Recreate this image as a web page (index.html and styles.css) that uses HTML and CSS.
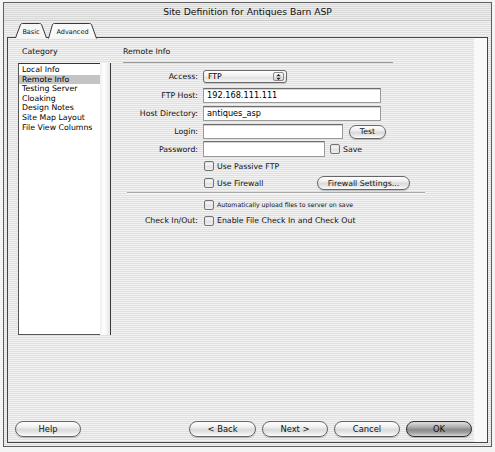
FILE: index.html
```html
<!DOCTYPE html>
<html>
<head>
<meta charset="utf-8">
<link rel="stylesheet" href="styles.css">
</head>
<body>
<div class="window">
  <div class="titlebar">Site Definition for Antiques Barn ASP</div>
  <div class="tabs">
    <div class="tab tab-basic">
      <svg class="tab-shape" viewBox="0 0 32 15" preserveAspectRatio="none"><path d="M0.5 15 L5.5 1.5 Q6 0.5 7.5 0.5 L24.5 0.5 Q26 0.5 26.5 1.5 L31.5 15" fill="#f6f6f6" stroke="#3a3a3a" stroke-width="1"/></svg>
      <span class="tab-label">Basic</span>
    </div>
    <div class="tab tab-adv">
      <svg class="tab-shape" viewBox="0 0 49 15" preserveAspectRatio="none"><path d="M0.5 15.5 L4.5 1.5 Q5 0.5 6.5 0.5 L41.5 0.5 Q43 0.5 43.5 1.5 L48.5 15.5" fill="#f8f8f8" stroke="#3a3a3a" stroke-width="1"/></svg>
      <span class="tab-label">Advanced</span>
    </div>
  </div>
  <div class="panel">
    <div class="content">
      <div class="sidebar">
        <div class="heading side-heading">Category</div>
        <div class="listbox">
          <ul class="list">
            <li>Local Info</li>
            <li class="selected">Remote Info</li>
            <li>Testing Server</li>
            <li>Cloaking</li>
            <li>Design Notes</li>
            <li>Site Map Layout</li>
            <li>File View Columns</li>
          </ul>
          <div class="track"></div>
        </div>
      </div>
      <div class="main">
        <div class="heading">Remote Info</div>
        <div class="rule"></div>
        <div class="row row-access">
          <div class="lbl">Access:</div>
          <div class="select"><span>FTP</span>
            <span class="stepper"><svg viewBox="0 0 8 9" width="8" height="9"><path d="M4 1 L6.5 3.6 L1.5 3.6 Z M4 8 L6.5 5.4 L1.5 5.4 Z" fill="#222"/></svg></span>
          </div>
        </div>
        <div class="row row-ftp">
          <div class="lbl">FTP Host:</div>
          <div class="field w-long">192.168.111.111</div>
        </div>
        <div class="row row-dir">
          <div class="lbl">Host Directory:</div>
          <div class="field w-long">antiques_asp</div>
        </div>
        <div class="row row-login">
          <div class="lbl">Login:</div>
          <div class="field w-login"></div>
          <div class="btn btn-test">Test</div>
        </div>
        <div class="row row-pass">
          <div class="lbl">Password:</div>
          <div class="field w-pass"></div>
          <div class="cb cb-save"></div>
          <div class="cbtext">Save</div>
        </div>
        <div class="row row-passive">
          <div class="lbl"></div>
          <div class="cb"></div>
          <div class="cbtext">Use Passive FTP</div>
        </div>
        <div class="row row-firewall">
          <div class="lbl"></div>
          <div class="cb"></div>
          <div class="cbtext fw-text">Use Firewall</div>
          <div class="btn btn-fw">Firewall Settings...</div>
        </div>
        <div class="rule2"></div>
        <div class="row row-auto">
          <div class="lbl"></div>
          <div class="cb"></div>
          <div class="cbtext small">Automatically upload files to server on save</div>
        </div>
        <div class="row row-check">
          <div class="lbl">Check In/Out:</div>
          <div class="cb"></div>
          <div class="cbtext">Enable File Check In and Check Out</div>
        </div>
      </div>
    </div>
    <div class="buttons">
      <div class="btn btn-big">Help</div>
      <div class="spacer"></div>
      <div class="btn btn-big btn-back">&lt; Back</div>
      <div class="btn btn-big">Next &gt;</div>
      <div class="btn btn-big">Cancel</div>
      <div class="btn btn-big btn-ok">OK</div>
    </div>
  </div>
</div>
</body>
</html>
```
FILE: styles.css
```css
* { box-sizing: border-box; }

body {
  margin: 0;
  width: 495px;
  height: 452px;
  overflow: hidden;
  background: #f4f4f4;
  font-family: "DejaVu Sans", sans-serif;
  font-size: 7.8px;
  color: #000;
}

.window {
  margin: 2px 0 0 3px;
  width: 489px;
  height: 445px;
  border: 1px solid #5e5e5e;
  display: flex;
  flex-direction: column;
  background: repeating-linear-gradient(to bottom, #f1f1f1 0 1px, #dfdfdf 1px 2px);
}

.titlebar {
  height: 18px;
  line-height: 18px;
  text-align: center;
  font-size: 9.2px;
  color: #111;
  background: repeating-linear-gradient(to bottom, #ececec 0 1px, #d9d9d9 1px 2px);
  border-bottom: 1px solid #c8c8c8;
}

.tabs {
  height: 17px;
  display: flex;
  align-items: flex-end;
  padding-left: 11px;
  margin-bottom: -1px;
  position: relative;
  z-index: 1;
}

.tab {
  position: relative;
  height: 15px;
  display: flex;
  align-items: center;
  justify-content: center;
  font-size: 6.5px;
  color: #111;
}

.tab-basic { width: 32px; }
.tab-adv { width: 49px; margin-left: 1px; }

.tab-shape {
  position: absolute;
  left: 0;
  top: 0;
  width: 100%;
  height: 100%;
  overflow: visible;
}

.tab-label {
  position: relative;
  padding-top: 2px;
}

.panel {
  flex: 1;
  margin: 0 3px 3px 3px;
  border: 1px solid #444;
  display: flex;
  flex-direction: column;
  background:
    linear-gradient(to right, transparent 0 466px, #f9f9f9 466px),
    repeating-linear-gradient(to bottom, #f2f2f2 0 1px, #e0e0e0 1px 2px);
}

.content {
  flex: 1;
  display: flex;
  padding-top: 8px;
}

.sidebar {
  width: 103px;
  padding-left: 10px;
}

.heading {
  height: 12px;
  line-height: 12px;
  color: #111;
}

.side-heading { padding-left: 4px; }

.listbox {
  margin-top: 5px;
  height: 272px;
  display: flex;
}

.list {
  margin: 0;
  padding: 1px 0 0 0;
  list-style: none;
  width: 82px;
  background: #fff;
  border: 1px solid #555;
  border-right: none;
  border-top-color: #333;
}

.list li {
  height: 9.6px;
  line-height: 9.6px;
  padding-left: 3px;
  white-space: nowrap;
}

.list li.selected { background: #c4c4c4; }

.track {
  width: 11px;
  background: linear-gradient(to right, #efefef, #ffffff 40%, #e6e6e6);
  border-right: 1px solid #3a3a3a;
}

.main {
  margin-left: 12px;
  width: 340px;
}

.rule {
  margin-top: 4px;
  width: 270px;
  height: 1px;
  background: #9a9a9a;
}

.row {
  display: flex;
  align-items: center;
}

.lbl {
  width: 75px;
  margin-right: 5px;
  text-align: right;
  white-space: nowrap;
  color: #111;
}

.row-access { margin-top: 7px; height: 13px; }
.row-ftp { margin-top: 5px; height: 15px; }
.row-dir { margin-top: 3px; height: 15px; }
.row-login { margin-top: 3px; height: 15px; }
.row-pass { margin-top: 2px; height: 16px; }
.row-passive { margin-top: 2px; height: 14px; }
.row-firewall { margin-top: 2px; height: 16px; }
.row-auto { margin-top: 5px; height: 11px; }
.row-check { margin-top: 4px; height: 13px; }

.select {
  position: relative;
  width: 84px;
  height: 13px;
  border: 1px solid #6a6a6a;
  border-radius: 3px;
  background: linear-gradient(to bottom, #ffffff, #eeeeee 50%, #dedede 51%, #f4f4f4);
  display: flex;
  align-items: center;
  padding-left: 4px;
  box-shadow: 0 1px 1px rgba(0,0,0,0.15);
}

.select span:first-child { flex: 1; }

.stepper {
  width: 11px;
  height: 9px;
  margin-right: 2px;
  border: 1px solid #8a8a8a;
  border-radius: 2px;
  background: linear-gradient(#fafafa, #d6d6d6);
  display: flex;
  align-items: center;
  justify-content: center;
}

.stepper svg { display: block; width: 7px; height: 8px; }

.field {
  height: 100%;
  background: #fff;
  border: 1px solid #9a9a9a;
  border-top-color: #6e6e6e;
  box-shadow: inset 0 1px 0 #d4d4d4;
  padding-left: 3px;
  line-height: 13px;
  font-size: 8.2px;
  white-space: nowrap;
}

.w-long { width: 178px; }
.w-login { width: 140px; }
.w-pass { width: 122px; }

.cb {
  width: 10px;
  height: 10px;
  margin-left: 1px;
  border: 1px solid #747474;
  border-radius: 2px;
  background: linear-gradient(to bottom, #ffffff, #e2e2e2 60%, #f0f0f0);
  box-shadow: inset 0 1px 1px rgba(0,0,0,0.12);
  flex: none;
}

.cb-save { margin-left: 5px; }

.cbtext {
  margin-left: 3px;
  white-space: nowrap;
  color: #111;
}

.cbtext.small { font-size: 6.2px; }

.fw-text { width: 100px; }

.btn {
  height: 14px;
  border: 1px solid #666;
  border-radius: 7px;
  background: linear-gradient(to bottom, #ffffff 0%, #f0f0f0 35%, #dadada 55%, #e6e6e6 75%, #fdfdfd 100%);
  box-shadow: 0 1px 1px rgba(0,0,0,0.2);
  display: flex;
  align-items: center;
  justify-content: center;
  white-space: nowrap;
  color: #111;
}

.btn-test { width: 37px; margin-left: 6px; }
.btn-fw { width: 93px; }

.rule2 {
  margin: 1px 0 0 4px;
  width: 298px;
  height: 2px;
  background: #a8a8a8;
  border-bottom: 1px solid #f6f6f6;
}

.buttons {
  height: 16px;
  display: flex;
  margin: 0 15px 5px 7px;
}

.spacer { flex: 1; }

.btn-big {
  width: 66px;
  height: 16px;
  border-radius: 8px;
  font-size: 8.4px;
  margin-left: 6px;
}

.btn-big:first-child { margin-left: 0; }
.btn-back { width: 67px; }

.btn-ok {
  border-color: #2e2e2e;
  background: linear-gradient(to bottom, #e0e0e0 0%, #b0b0b0 35%, #8a8a8a 55%, #a0a0a0 75%, #d6d6d6 100%);
}
```
